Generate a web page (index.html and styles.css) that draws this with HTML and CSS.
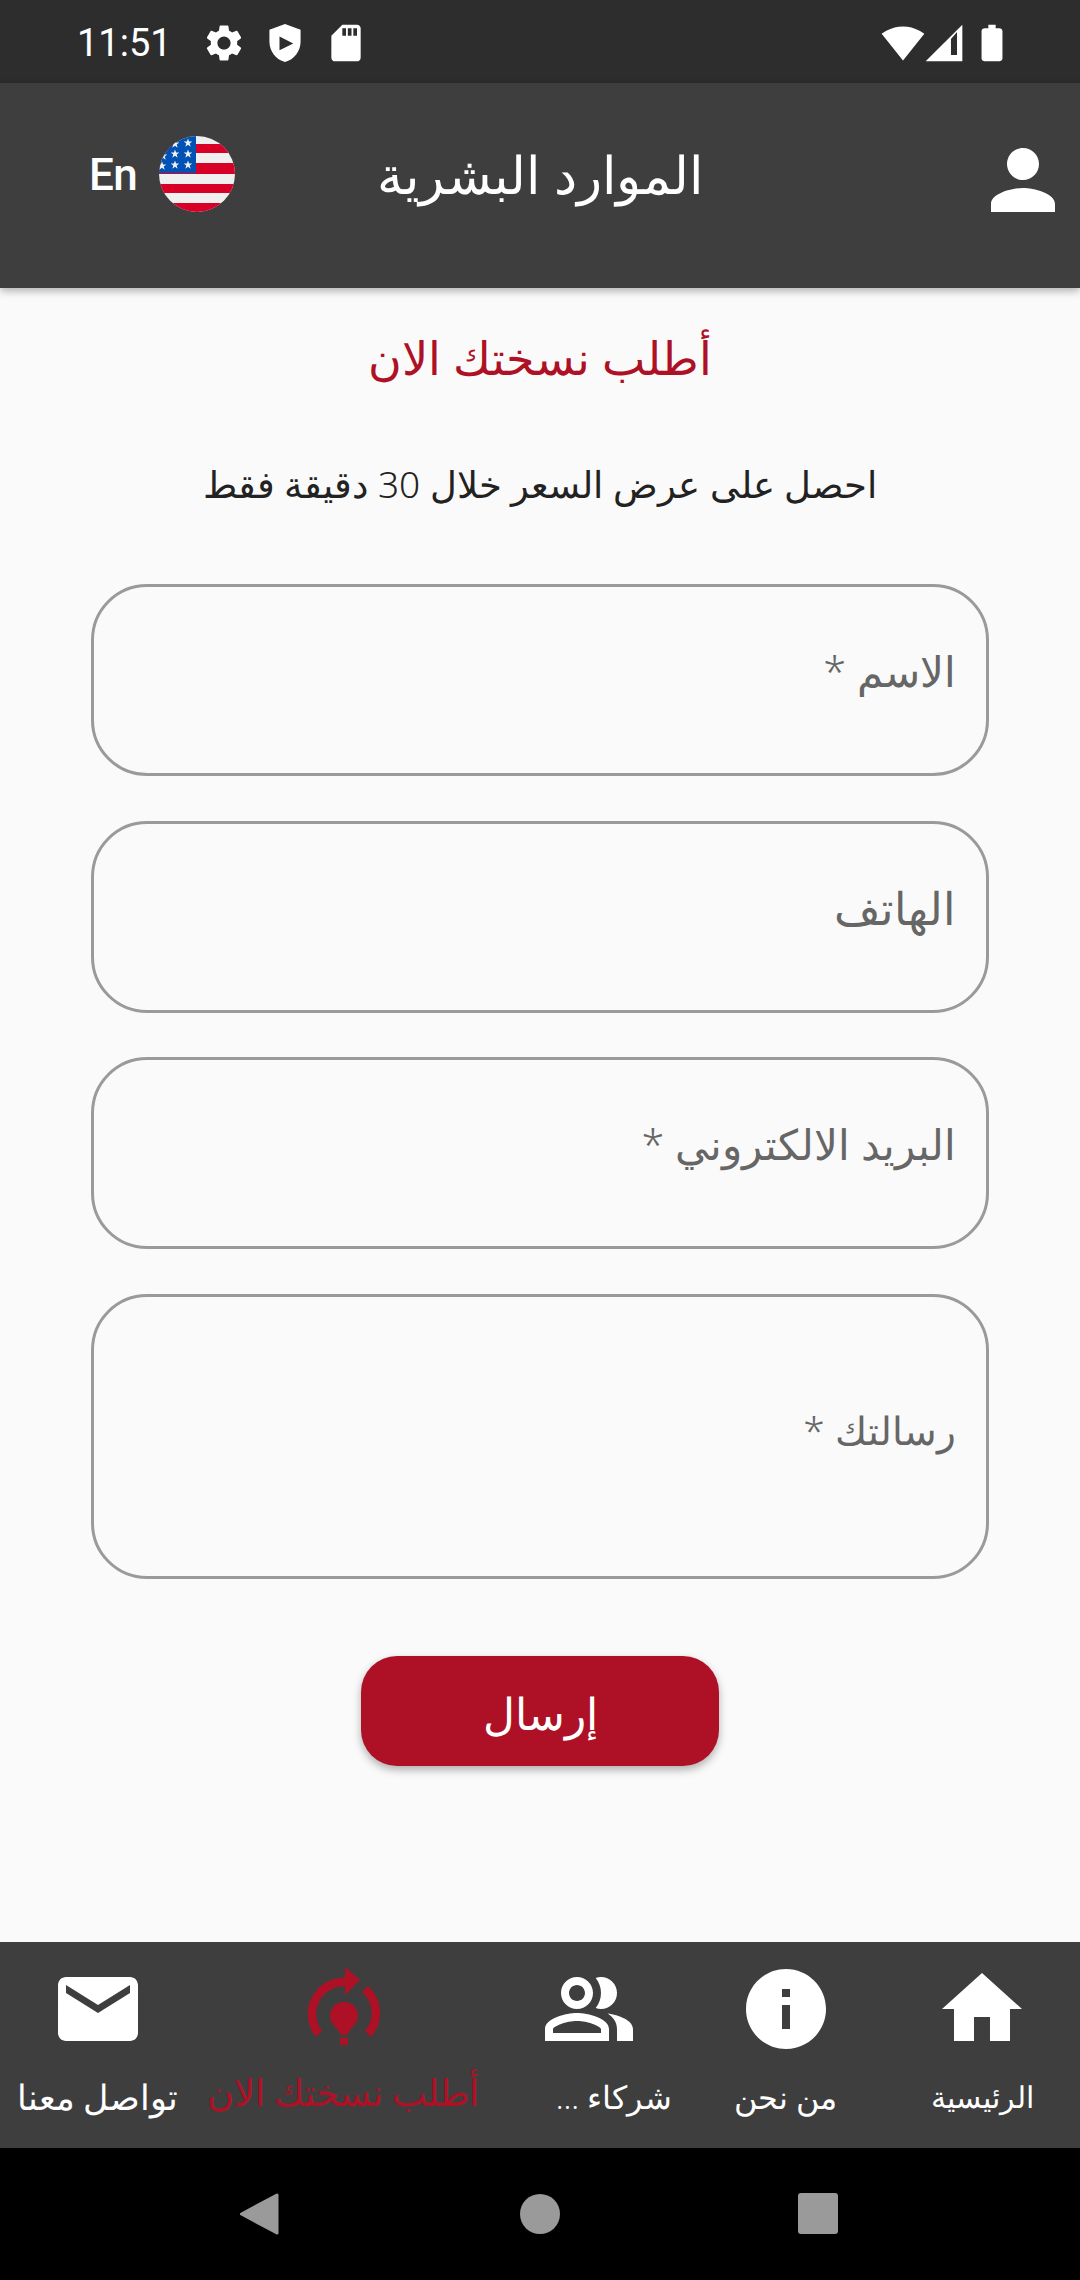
FILE: index.html
```html
<!DOCTYPE html>
<html lang="ar">
<head>
<meta charset="utf-8">
<title>طلب نسخة</title>
<link rel="stylesheet" href="styles.css">
</head>
<body>
<div class="screen">
  <header class="status-bar">
    <div class="status-left">
      <span class="time">11:51</span>
      <svg class="st-icon" viewBox="0 0 24 24"><path d="M19.14 12.94c.04-.3.06-.61.06-.94 0-.32-.02-.64-.07-.94l2.03-1.58c.18-.14.23-.41.12-.61l-1.92-3.32c-.12-.22-.37-.29-.59-.22l-2.39.96c-.5-.38-1.03-.7-1.62-.94l-.36-2.54c-.04-.24-.24-.41-.48-.41h-3.84c-.24 0-.43.17-.47.41l-.36 2.54c-.59.24-1.13.57-1.62.94l-2.39-.96c-.22-.08-.47 0-.59.22L2.74 8.87c-.12.21-.08.47.12.61l2.03 1.58c-.05.3-.09.63-.09.94s.02.64.07.94l-2.03 1.58c-.18.14-.23.41-.12.61l1.92 3.32c.12.22.37.29.59.22l2.39-.96c.5.38 1.03.7 1.62.94l.36 2.54c.05.24.24.41.48.41h3.84c.24 0 .44-.17.47-.41l.36-2.54c.59-.24 1.13-.56 1.62-.94l2.39.96c.22.08.47 0 .59-.22l1.92-3.32c.12-.22.07-.47-.12-.61l-2.01-1.58zM12 15.6c-1.98 0-3.6-1.62-3.6-3.6s1.62-3.6 3.6-3.6 3.6 1.62 3.6 3.6-1.62 3.6-3.6 3.6z"/></svg>
      <svg class="st-icon" viewBox="0 0 24 24"><path fill-rule="evenodd" d="M12 1.600 3.500 4.800v6.400c0 5.200 3.500 9.900 8.500 11.200 5-1.300 8.500-6 8.500-11.200V4.800zM9 8.500V16l7.500-3.700z"/></svg>
      <svg class="st-icon" viewBox="0 0 24 24"><path d="M18 2h-8L4.020 8 4 20c0 1.100.9 2 2 2h12c1.100 0 2-.9 2-2V4c0-1.100-.9-2-2-2zm-6 6h-2V4h2v4zm3 0h-2V4h2v4zm3 0h-2V4h2v4z"/></svg>
    </div>
    <div class="status-right">
      <svg class="st-icon" viewBox="0 0 24 24"><path d="M12.010 21.490 23.640 7c-.45-.34-4.930-4-11.640-4C5.280 3 .81 6.660.36 7l11.630 14.490.1.010.01-.01z"/></svg>
      <svg class="st-icon st-signal" viewBox="0 0 24 24"><path fill-rule="evenodd" d="M2 22h20V2zM15.800 18.500h3.300V6l-3.300 3.800z"/></svg>
      <svg class="st-icon st-batt" viewBox="0 0 24 24"><path d="M16 4h-2V2h-4v2H8c-.9 0-1.700.7-1.700 1.500v15c0 .8.8 1.500 1.700 1.500h8c.9 0 1.700-.7 1.700-1.500v-15C17.700 4.700 16.900 4 16 4z"/></svg>
    </div>
  </header>

  <header class="app-bar">
    <div class="lang">
      <span class="lang-text">En</span>
      <svg class="flag" viewBox="0 0 76 76">
        <defs>
          <clipPath id="flagclip"><circle cx="38" cy="38" r="38"/></clipPath>
          <polygon id="star" points="0,-4.500 1.100,-1.400 4.300,-1.400 1.700,.6 2.700,3.700 0,1.800 -2.700,3.700 -1.700,.6 -4.300,-1.400 -1.100,-1.400"/>
        </defs>
        <g clip-path="url(#flagclip)">
          <rect width="76" height="76" fill="#f0f0f0"/>
          <rect y="8" width="76" height="9" fill="#d80027"/>
          <rect y="27" width="76" height="11" fill="#d80027"/>
          <rect y="48" width="76" height="9" fill="#d80027"/>
          <rect y="67" width="76" height="9" fill="#d80027"/>
          <rect width="37" height="37" fill="#0052b4"/>
          <g fill="#f0f0f0">
            <use href="#star" x="29" y="7"/><use href="#star" x="16" y="8"/>
            <use href="#star" x="29" y="18"/><use href="#star" x="16" y="18"/><use href="#star" x="4" y="20"/>
            <use href="#star" x="29" y="29"/><use href="#star" x="16" y="29"/><use href="#star" x="3" y="30"/>
          </g>
        </g>
      </svg>
    </div>
    <h1 class="app-title">الموارد البشرية</h1>
    <svg class="user-icon" viewBox="0 0 24 24"><path d="M12 12c2.210 0 4-1.790 4-4s-1.790-4-4-4-4 1.790-4 4 1.790 4 4 4zm0 2c-2.670 0-8 1.340-8 4v2h16v-2c0-2.660-5.330-4-8-4z"/></svg>
  </header>

  <main class="content">
    <h2 class="page-title">أطلب نسختك الان</h2>
    <p class="subtitle">احصل على عرض السعر خلال 30 دقيقة فقط</p>
    <form class="form">
      <div class="field"><span class="ph">الاسم *</span></div>
      <div class="field"><span class="ph ph-wide">الهاتف</span></div>
      <div class="field"><span class="ph">البريد الالكتروني *</span></div>
      <div class="field field-tall"><span class="ph ph-narrow">رسالتك *</span></div>
      <button type="button" class="submit">إرسال</button>
    </form>
  </main>

  <nav class="bottom-nav">
    <div class="nav-item">
      <svg class="nav-icon" viewBox="0 0 24 24"><path d="M10 20v-6h4v6h5v-8h3L12 3 2 12h3v8z"/></svg>
      <span class="nav-label">الرئيسية</span>
    </div>
    <div class="nav-item">
      <svg class="nav-icon" viewBox="0 0 24 24"><path d="M12 2C6.480 2 2 6.480 2 12s4.480 10 10 10 10-4.480 10-10S17.520 2 12 2zm1 15h-2v-6h2v6zm0-8h-2V7h2v2z"/></svg>
      <span class="nav-label label-md">من نحن</span>
    </div>
    <div class="nav-item">
      <svg class="nav-icon" viewBox="0 0 24 24"><path d="M16.670 13.130C18.040 14.060 19 15.320 19 17v3h4v-3c0-2.180-3.570-3.470-6.330-3.870z"/><path d="M15 12c2.210 0 4-1.790 4-4s-1.790-4-4-4c-.47 0-.91.1-1.330.24C14.500 5.270 15 6.580 15 8s-.5 2.730-1.330 3.760c.42.14.86.24 1.330.24z"/><path d="M9 12c2.210 0 4-1.790 4-4s-1.790-4-4-4-4 1.790-4 4 1.790 4 4 4zm0-6c1.100 0 2 .9 2 2s-.9 2-2 2-2-.9-2-2 .9-2 2-2z"/><path d="M9 13c-2.670 0-8 1.340-8 4v3h16v-3c0-2.660-5.330-4-8-4zm6 5H3v-.99C3.200 16.290 6.300 15 9 15s5.800 1.290 6 2z"/></svg>
      <span class="nav-label label-md label-shift">شركاء ...</span>
    </div>
    <div class="nav-item nav-active">
      <svg class="nav-icon" viewBox="0 0 96 96">
        <path class="arc" d="M24 73A32 32 0 0 1 50 21"/>
        <path class="solid" d="M50 6l15 13-15 15z"/>
        <path class="arc" d="M70 28A32 32 0 0 1 73 73"/>
        <path class="solid" d="M49 41c-8 0-14 6-14 14 0 8 8 12 11 19h6c3-7 11-11 11-19 0-8-6-14-14-14z"/>
        <rect class="solid" x="45" y="77" width="8" height="7"/>
      </svg>
      <span class="nav-label">أطلب نسختك الان</span>
    </div>
    <div class="nav-item">
      <svg class="nav-icon" viewBox="0 0 24 24"><path d="M20 4H4c-1.100 0-1.990.9-1.990 2L2 18c0 1.100.9 2 2 2h16c1.100 0 2-.9 2-2V6c0-1.100-.9-2-2-2zm0 4l-8 5-8-5V6l8 5 8-5v2z"/></svg>
      <span class="nav-label label-lg">تواصل معنا</span>
    </div>
  </nav>

  <footer class="sys-nav">
    <svg class="sys-icon" viewBox="0 0 44 44"><path d="M39 3v38L3.500 22z" stroke="#9a9a9a" stroke-width="3" stroke-linejoin="round"/></svg>
    <svg class="sys-icon" viewBox="0 0 44 44"><circle cx="22" cy="22" r="20"/></svg>
    <svg class="sys-icon" viewBox="0 0 44 44"><rect x="0" y="1" width="40" height="41" rx="3"/></svg>
  </footer>
</div>
</body>
</html>
```

FILE: styles.css
```css
* { box-sizing: border-box; }
html, body { margin: 0; padding: 0; }
body {
  width: 1080px;
  height: 2280px;
  overflow: hidden;
  font-family: "Noto Sans", "DejaVu Sans", sans-serif;
  font-weight: 300;
}
.screen {
  width: 1080px;
  height: 2280px;
  display: flex;
  flex-direction: column;
  background: #fafafa;
}

/* status bar */
.status-bar {
  height: 83px;
  flex: none;
  background: #2d2d2d;
  display: flex;
  justify-content: space-between;
  align-items: center;
  padding: 3px 66px 0 77px;
  color: #fff;
}
.status-left, .status-right { display: flex; align-items: center; }
.status-left { gap: 17px; }
.time { font-family: Roboto, sans-serif; font-weight: 400; font-size: 38px; margin-right: 13px; }
.st-icon { width: 44px; height: 44px; fill: #fff; display: block; }
.st-signal { margin-left: -3px; }
.st-batt { margin-left: 4px; }

/* app bar */
.app-bar {
  height: 205px;
  flex: none;
  background: #3e3e3e;
  display: flex;
  align-items: center;
  padding: 0 9px 24px 89px;
  box-shadow: 0 3px 8px rgba(0,0,0,.3);
  z-index: 1;
  color: #fff;
}
.lang { display: flex; align-items: center; gap: 22px; flex: none; }
.lang-text { font-family: Roboto, sans-serif; font-weight: 500; font-size: 44px; letter-spacing: -.5px; line-height: 1; margin-top: 2px; }
.flag { width: 76px; height: 76px; display: block; }
.app-title {
  flex: 1;
  margin: 2px 0 0;
  text-align: center;
  font-weight: 300;
  font-size: 52px;
  line-height: 1.2;
  padding-right: 130px;
}
.user-icon { width: 96px; height: 96px; fill: #fff; flex: none; margin-top: 12px; }

/* content */
.content {
  flex: 1;
  padding: 0 91px;
  display: flex;
  flex-direction: column;
  align-items: center;
}
.page-title {
  margin: 36px 0 0;
  height: 66px;
  font-size: 46px;
  line-height: 66px;
  font-weight: 300;
  color: #ae1126;
}
.subtitle {
  margin: 72px 0 0;
  height: 44px;
  line-height: 44px;
  font-size: 37px;
  color: #222;
}
.form {
  margin-top: 78px;
  width: 100%;
  display: flex;
  flex-direction: column;
  gap: 44.500px;
  align-items: center;
}
.field {
  width: 100%;
  height: 192px;
  border: 3px solid #9a9a9a;
  border-radius: 56px;
  direction: rtl;
  padding: 56px 30px 0;
}
.field-tall { height: 285px; padding-top: 105px; }
.ph { font-size: 41.500px; line-height: 56px; color: #666; }
.ph-wide { font-size: 45px; }
.ph-narrow { font-size: 39px; }
.submit {
  margin-top: 33px;
  width: 358px;
  height: 110px;
  border: 0;
  padding: 3px 0 0;
  border-radius: 36px;
  background: #ae1126;
  color: #fff;
  font-family: inherit;
  font-weight: 300;
  font-size: 44px;
  box-shadow: 0 4px 8px rgba(0,0,0,.3);
}

/* bottom nav */
.bottom-nav {
  height: 206px;
  flex: none;
  background: #3e3e3e;
  display: grid;
  grid-template-columns: 196px 197px 196px 296px 195px;
  direction: rtl;
  color: #fff;
}
.nav-item {
  display: flex;
  flex-direction: column;
  align-items: center;
  padding-top: 19px;
}
.nav-icon { width: 96px; height: 96px; fill: #fff; display: block; flex: none; }
.nav-label { font-size: 30px; line-height: 44px; margin-top: 18px; white-space: nowrap; }
.label-md { font-size: 32px; }
.label-lg { font-size: 34.500px; }
.label-shift { margin-right: -50px; }
.nav-active { color: #ae1126; }
.nav-active .nav-label { font-size: 36.500px; margin-top: 13px; }
.arc { fill: none; stroke: #ae1126; stroke-width: 8.500; }
.solid { fill: #ae1126; }

/* system nav */
.sys-nav {
  height: 132px;
  flex: none;
  background: #000;
  display: flex;
  align-items: center;
  justify-content: center;
  gap: 236px;
}
.sys-icon { width: 44px; height: 44px; fill: #9a9a9a; display: block; }
```
